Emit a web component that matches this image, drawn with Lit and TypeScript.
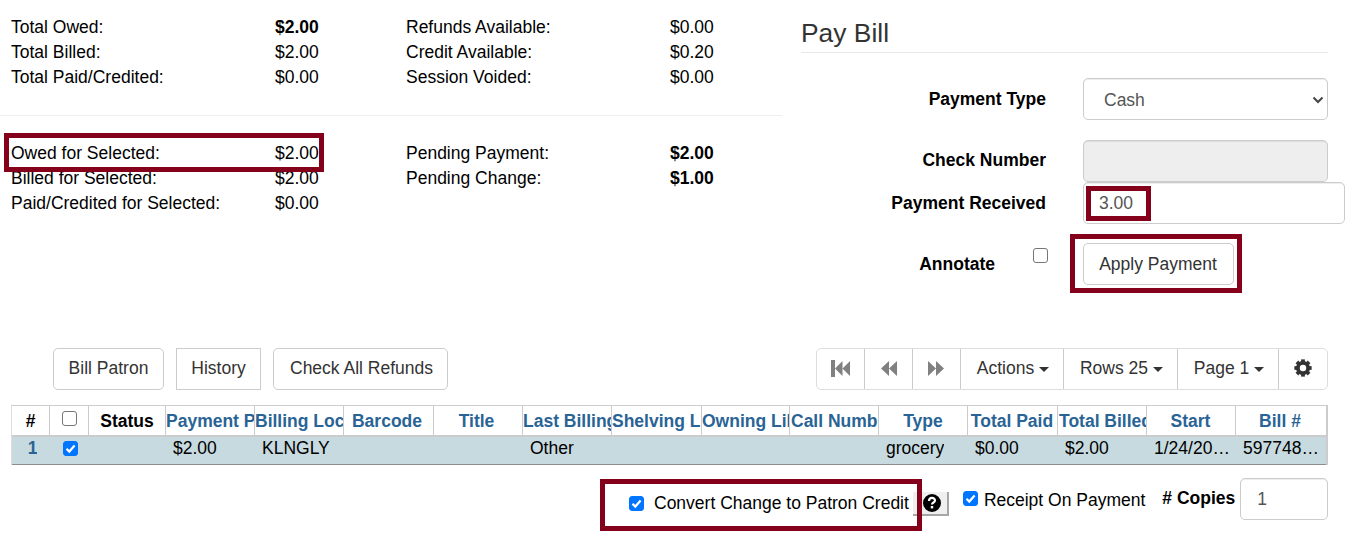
import { LitElement, html, css, svg } from "lit";
import { customElement } from "lit/decorators.js";

const COLS = [
  ["#", 38, "dark"], ["", 39, "dark"], ["Status", 77, "dark"],
  ["Payment Pending", 89, "l"], ["Billing Location", 89, "l"], ["Barcode", 90, "c"],
  ["Title", 89, "c"], ["Last Billing Type", 89, "l"], ["Shelving Location", 90, "l"],
  ["Owning Library", 88, "l"], ["Call Number", 89, "l1"], ["Type", 89, "c0"],
  ["Total Paid", 90, "c1"], ["Total Billed", 89, "l1"], ["Start", 89, "c1"], ["Bill #", 91, "c"],
];
const CELLS = ["1", "", "", "$2.00", "KLNGLY", "", "", "Other", "", "", "", "grocery", "$0.00", "$2.00", "1/24/2023 3:15 PM", "5977481234"];

@customElement("app-root")
export class AppRoot extends LitElement {
  static styles = css`
    :host { display: block; position: relative; width: 1364px; height: 534px; overflow: hidden; background: #fff; font-family: "Liberation Sans", Arial, sans-serif; font-size: 17.5px; color: #000; line-height: 25px; }
    * { box-sizing: border-box; }
    .top { display: flex; height: 348px; }
    .left { width: 782px; flex: none; padding-top: 15px; }
    .sum { display: grid; grid-template-columns: 264px 131px 264px 1fr; padding-left: 11px; height: 100px; grid-auto-rows: 25px; align-content: start; }
    .sum.second { border-top: 1px solid #eee; padding-top: 25px; height: auto; }
    .b { font-weight: 700; }
    .right { flex: none; width: 527px; margin-left: 19px; position: relative; }
    h3 { margin: 0; height: 53px; padding-top: 16px; border-bottom: 1px solid #e7e7e7; font-weight: 400; font-size: 26.4px; line-height: 34px; color: #333; }
    .row { display: flex; align-items: center; }
    .row.first { margin-top: 25px; }
    .lab { width: 245px; flex: none; text-align: right; font-weight: 700; }
    .lab.nudge { padding-bottom: 2px; }
    .ctl { margin-left: 37px; width: 245px; height: 42px; border: 1px solid #ccc; border-radius: 5px; background: #fff; color: #555; padding: 0 20px; box-shadow: inset 0 1px 1px rgba(0,0,0,.075); flex: none; display: flex; align-items: center; justify-content: space-between; }
    .ctl.type { padding-right: 3px; padding-top: 2px; }
    .ctl.dis { background: #eee; }
    .r2 { margin-top: 20px; }
    .ctl.rcv { width: 262px; padding-left: 15px; }
    .r4 { margin-top: 19px; }
    .r4 .lab { width: 195px; padding-right: 1px; }
    .cb { margin: 0; width: 15px; height: 15px; border: 1px solid #767676; border-radius: 3px; background: #fff; flex: none; display: inline-flex; align-items: center; justify-content: center; }
    .cb.on { background: #0075ff; border-color: #0075ff; }
    .cb svg { width: 13px; height: 13px; }
    .annot { margin-left: 37px; margin-top: -14px; }
    .btn { display: inline-flex; align-items: center; justify-content: center; height: 42px; border: 1px solid #ccc; background: #fff; border-radius: 5px; color: #333; }
    .apply { width: 151px; margin-left: 35px; padding-right: 1px; }
    .bar { display: flex; height: 42px; padding-left: 53px; }
    .bar .btn { padding-bottom: 2px; }
    .bar .btn.a { width: 111px; }
    .bar .btn.h { width: 85px; margin-left: 12px; border-radius: 0; }
    .bar .btn.c { width: 175px; margin-left: 12px; padding-left: 2px; }
    .pager { display: flex; margin-left: auto; margin-right: 36px; width: 512px; height: 42px; border: 1px solid #ddd; border-radius: 5px; }
    .pager > div { display: flex; align-items: center; justify-content: center; border-left: 1px solid #ccc; color: #333; flex: none; height: 100%; padding-bottom: 2px; }
    .pager > div:first-child { border-left: 0; }
    .pager > .tx { padding-left: 2px; }
    .pager > .fw { padding-right: 2px; }
    .caret { width: 0; height: 0; border-left: 5px solid transparent; border-right: 5px solid transparent; border-top: 5px solid #333; margin-left: 5px; margin-top: 2px; }
    .grid { margin: 15px 0 0 11px; width: 1317px; border: 1px solid #ccc; border-bottom: 0; border-left-color: #ddd; border-right-width: 2px; }
    .tr { display: flex; }
    .tr.head { height: 29px; background: #fff; }
    .th { flex: none; height: 100%; border-right: 1px solid #ccc; overflow: hidden; white-space: nowrap; font-weight: 700; color: #2a6496; line-height: 29px; padding-top: 2px; display: flex; align-items: center; }
    .th:last-child { border-right: 0; }
    .th.c { justify-content: center; padding-right: 3px; }
    .th.c0 { justify-content: center; }
    .th.c1 { justify-content: center; padding-right: 1px; }
    .th.l1 { padding-left: 1px; }
    .th.dark { justify-content: center; color: #000; }
    .th .cb { margin-bottom: 6px; }
    .tr.body { height: 30px; background: #c7dadf; border-top: 2px solid #ccc; border-bottom: 1px solid #8c8c8c; }
    .td { flex: none; overflow: hidden; white-space: nowrap; padding: 0 4px 4px 7px; display: flex; align-items: center; }
    .td span { overflow: hidden; text-overflow: ellipsis; }
    .td.n { color: #2a6496; font-weight: 700; justify-content: center; }
    .td.x { justify-content: center; padding-left: 5px; }
    .foot { display: flex; position: relative; height: 70px; padding-left: 629px; }
    .conv { display: flex; align-items: center; height: 25px; margin-top: 26px; }
    .conv .t { margin-left: 10px; white-space: nowrap; }
    .help { width: 36px; height: 24px; margin: 27px 0 0 4px; padding-left: 10px; background: #efefef; border-right: 2px solid #a6a6a6; border-bottom: 2px solid #a6a6a6; display: flex; align-items: center; flex: none; }
    .rec { display: flex; align-items: center; height: 25px; margin: 23px 0 0 14px; }
    .rec .cb { margin-top: -5px; }
    .rec .t { margin-left: 6px; white-space: nowrap; }
    .cop { font-weight: 700; margin: 21px 0 0 17px; white-space: nowrap; }
    .num { margin: 13px 0 0 5px; width: 88px; height: 42px; border: 1px solid #ccc; border-radius: 5px; color: #555; display: flex; align-items: center; padding-left: 16px; box-shadow: inset 0 1px 1px rgba(0,0,0,.075); }
    .mark { position: absolute; border: 5px solid #84001b; pointer-events: none; }
    .m1 { left: 4px; top: 133px; width: 320px; height: 39px; }
    .m2 { left: 1086px; top: 186px; width: 65px; height: 35px; }
    .m3 { left: 1070px; top: 234px; width: 172px; height: 59px; }
    .m4 { left: 600px; top: 479px; width: 322px; height: 52px; }
  `;

  private check(on: boolean) {
    return html`<span class="cb ${on ? "on" : ""}">${on ? html`<svg viewBox="0 0 13 13"><path d="M2.500 6.800 5.300 9.600 10.600 3.600" fill="none" stroke="#fff" stroke-width="2.2"/></svg>` : ""}</span>`;
  }

  render() {
    const teeth = [0, 45, 90, 135, 180, 225, 270, 315];
    return html`
      <div class="top">
        <div class="left">
          <div class="sum">
            <div>Total Owed:</div><div class="b">$2.00</div><div>Refunds Available:</div><div>$0.00</div>
            <div>Total Billed:</div><div>$2.00</div><div>Credit Available:</div><div>$0.20</div>
            <div>Total Paid/Credited:</div><div>$0.00</div><div>Session Voided:</div><div>$0.00</div>
          </div>
          <div class="sum second">
            <div>Owed for Selected:</div><div>$2.00</div><div>Pending Payment:</div><div class="b">$2.00</div>
            <div>Billed for Selected:</div><div>$2.00</div><div>Pending Change:</div><div class="b">$1.00</div>
            <div>Paid/Credited for Selected:</div><div>$0.00</div><div></div><div></div>
          </div>
        </div>
        <div class="right">
          <h3>Pay Bill</h3>
          <div class="row first"><div class="lab">Payment Type</div>
            <div class="ctl type">Cash<svg width="12" height="8" viewBox="0 0 12 8"><path d="M1.500 1.500 6 6l4.500-4.500" fill="none" stroke="#444" stroke-width="2"/></svg></div></div>
          <div class="row r2"><div class="lab nudge">Check Number</div><div class="ctl dis"></div></div>
          <div class="row"><div class="lab">Payment Received</div><div class="ctl rcv">3.00</div></div>
          <div class="row r4"><div class="lab">Annotate</div><span class="annot">${this.check(false)}</span><div class="btn apply">Apply Payment</div></div>
        </div>
      </div>
      <div class="bar">
        <div class="btn a">Bill Patron</div><div class="btn h">History</div><div class="btn c">Check All Refunds</div>
        <div class="pager">
          <div style="width:47px"><svg width="19" height="17" viewBox="0 0 19 17"><path d="M0 0h4v17H0zM4 8.500 11.500 1v15zM11.500 8.500 19 1v15z" fill="#808080"/></svg></div>
          <div style="width:48px"><svg width="16" height="17" viewBox="0 0 16 17"><path d="M0 8.500 8 1v15zM8 8.500 16 1v15z" fill="#808080"/></svg></div>
          <div class="fw" style="width:48px"><svg width="16" height="17" viewBox="0 0 16 17"><path d="M0 1l8 7.500L0 16zM8 1l8 7.500L8 16z" fill="#808080"/></svg></div>
          <div class="tx" style="width:103px">Actions<span class="caret"></span></div>
          <div class="tx" style="width:114px">Rows 25<span class="caret"></span></div>
          <div class="tx" style="width:101px">Page 1<span class="caret"></span></div>
          <div style="width:49px"><svg width="18" height="18" viewBox="0 0 24 24">
            <circle cx="12" cy="12" r="6.800" fill="none" stroke="#333" stroke-width="5"/>
            ${teeth.map((a) => svg`<rect x="9.500" y="0.500" width="5" height="5" fill="#333" transform="rotate(${a} 12 12)"/>`)}
          </svg></div>
        </div>
      </div>
      <div class="grid">
        <div class="tr head">
          ${COLS.map(([t, w, k], i) => html`<div class="th ${k}" style="width:${w}px">${i === 1 ? this.check(false) : t}</div>`)}
        </div>
        <div class="tr body">
          ${CELLS.map((t, i) => html`<div class="td ${i === 0 ? "n" : i === 1 ? "x" : ""}" style="width:${COLS[i][1]}px">${i === 1 ? this.check(true) : html`<span>${t}</span>`}</div>`)}
        </div>
      </div>
      <div class="foot">
        <div class="conv">${this.check(true)}<span class="t">Convert Change to Patron Credit</span></div>
        <div class="help"><svg width="18" height="18" viewBox="0 0 18 18"><circle cx="9" cy="9" r="9" fill="#000"/><path d="M6 7c0-4 6-4 6-.500 0 2-3 2-3 4" fill="none" stroke="#fff" stroke-width="2.200"/><rect x="7.800" y="12" width="2.400" height="2.400" fill="#fff"/></svg></div>
        <div class="rec">${this.check(true)}<span class="t">Receipt On Payment</span></div>
        <div class="cop"># Copies</div>
        <div class="num">1</div>
      </div>
      <div class="mark m1"></div><div class="mark m2"></div><div class="mark m3"></div><div class="mark m4"></div>
    `;
  }
}
